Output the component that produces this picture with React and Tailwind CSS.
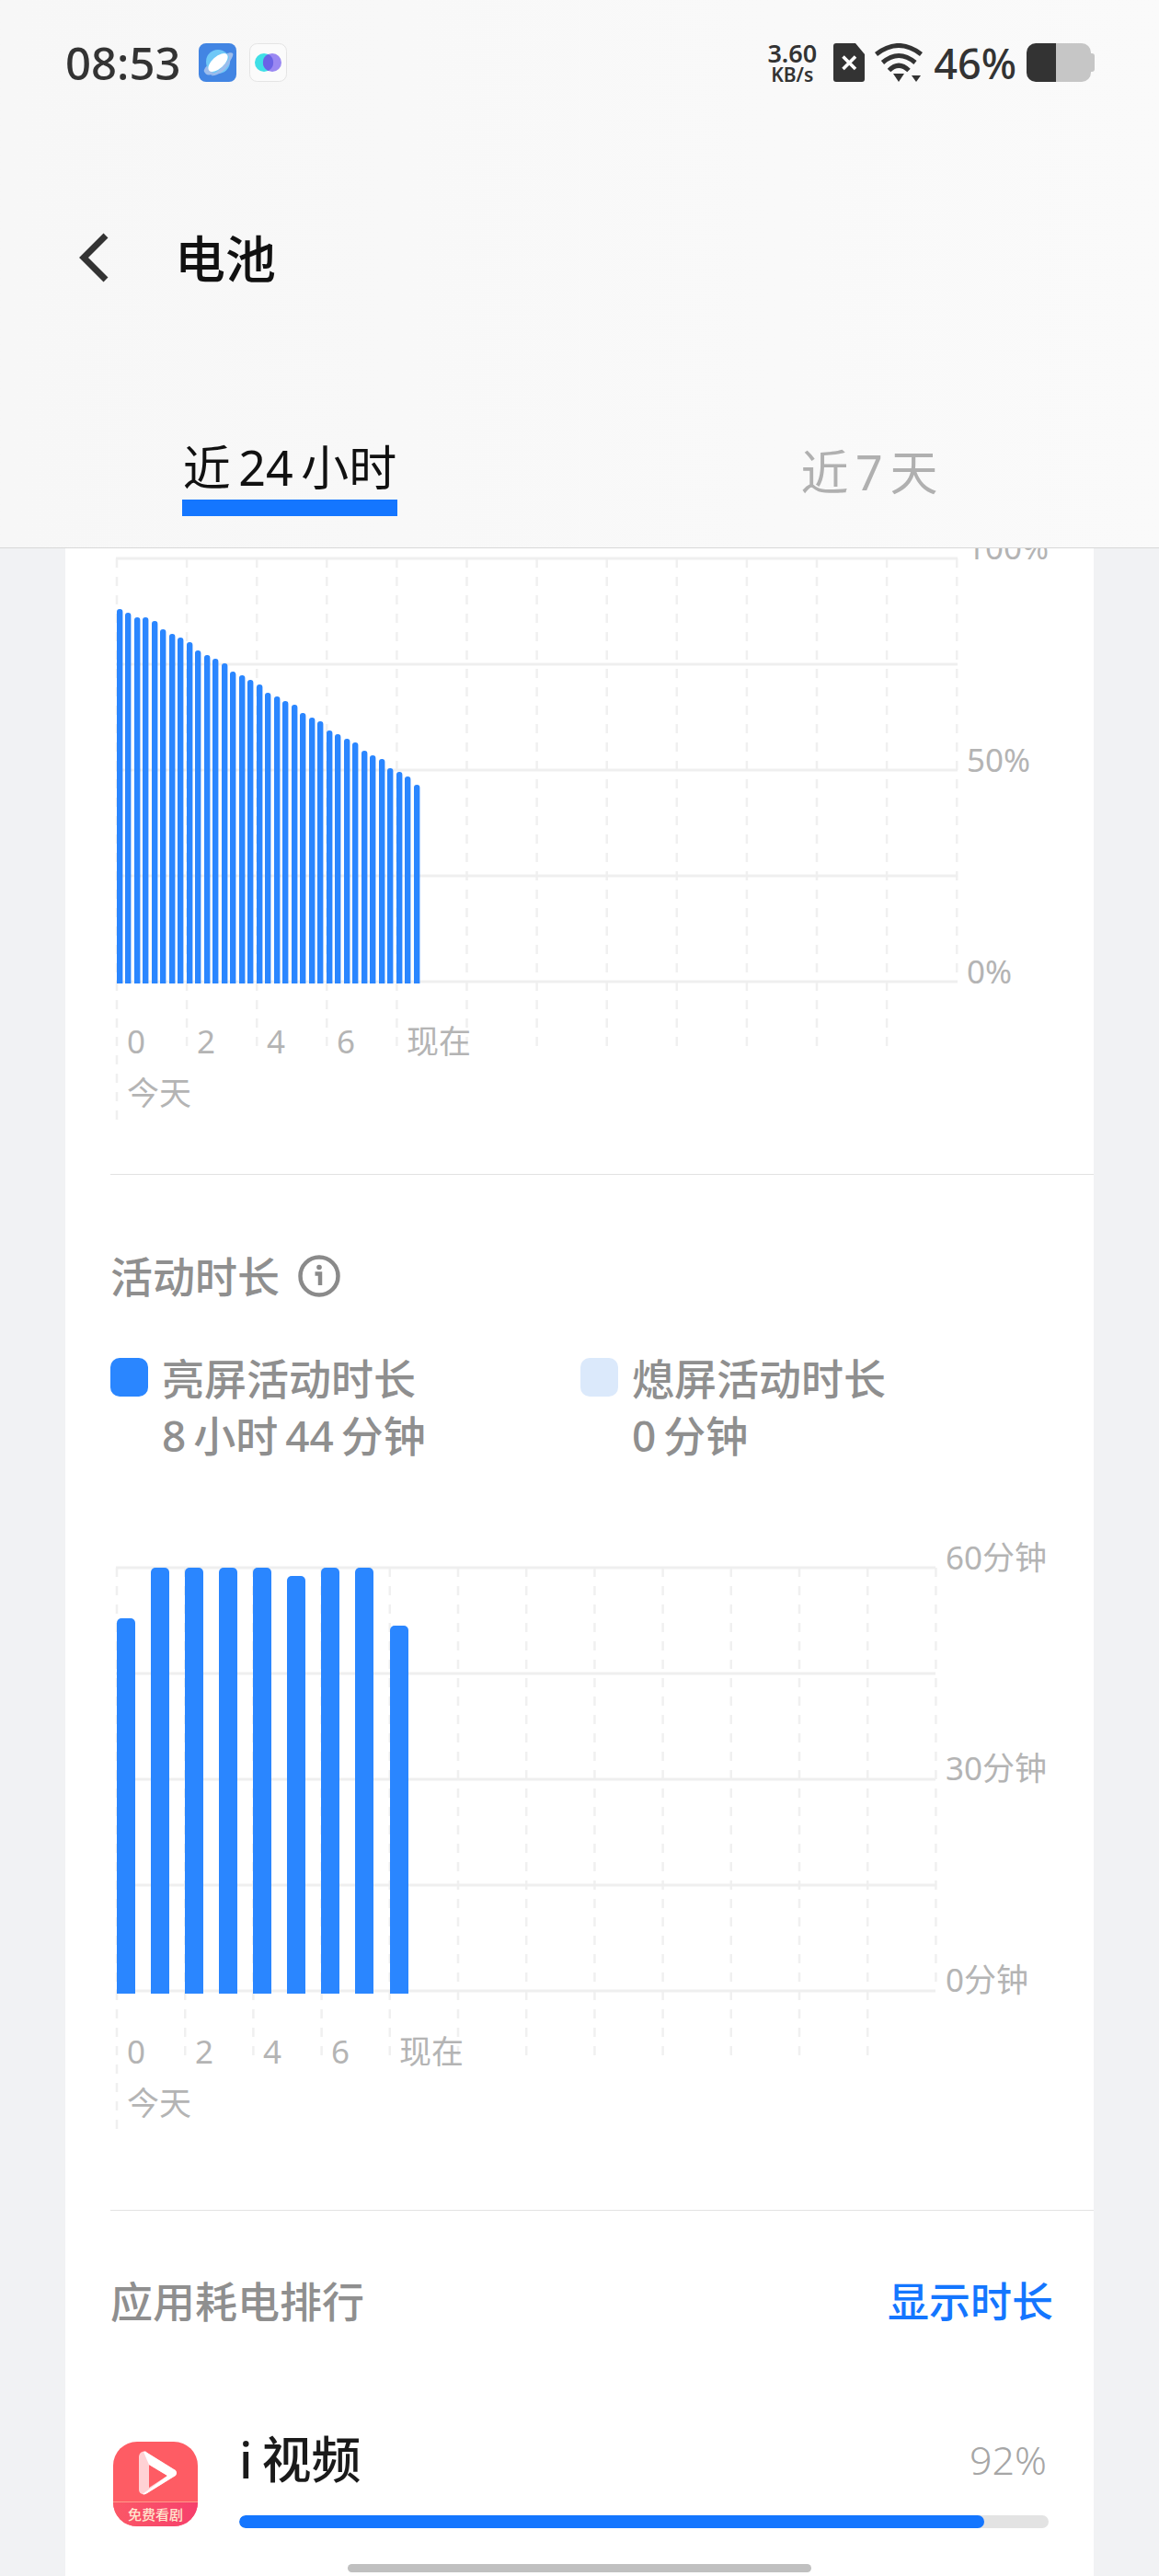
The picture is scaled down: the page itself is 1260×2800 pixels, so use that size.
import React from "react";

const batteryTops = [
  662, 666, 671, 671, 675, 684, 689, 693, 698, 707, 712, 716, 721, 730, 734, 739, 744, 753,
  757, 762, 766, 775, 780, 784, 794, 798, 803, 807, 816, 821, 825, 835, 839, 844, 853,
];

const activityBars = [
  { x: 127, top: 1759 },
  { x: 164, top: 1704 },
  { x: 201, top: 1704 },
  { x: 238, top: 1704 },
  { x: 275, top: 1704 },
  { x: 312, top: 1713 },
  { x: 349, top: 1704 },
  { x: 386, top: 1704 },
  { x: 424, top: 1767 },
];

const barPath = (x, top, bottom, w, r) =>
  `M${x} ${bottom}V${top + r}a${r} ${r} 0 0 1 ${r} ${-r}h${w - 2 * r}a${r} ${r} 0 0 1 ${r} ${r}V${bottom}z`;

const AxisText = ({ x, y, children }) => (
  <text x={x} y={y} dominantBaseline="central" className="fill-[#b4b4b4] text-[35px]">
    {children}
  </text>
);

const Grid = ({ left, step, right, top, rowStep, bottom, tickEnd, firstEnd }) => (
  <g>
    {[0, 1, 2, 3, 4, 5, 6, 7, 8, 9, 10, 11, 12].map((i) => (
      <line
        key={i}
        x1={left + step * i}
        x2={left + step * i}
        y1={top}
        y2={i === 0 ? firstEnd : i === 12 ? bottom : tickEnd}
        stroke="#f0f0f0"
        strokeWidth="2.5"
        strokeDasharray="10 10"
      />
    ))}
    {[0, 1, 2, 3, 4].map((i) => (
      <line
        key={i}
        x1={left - 1}
        x2={right}
        y1={i === 4 ? bottom : top + rowStep * i}
        y2={i === 4 ? bottom : top + rowStep * i}
        stroke="#efefef"
        strokeWidth="3"
      />
    ))}
  </g>
);

const BatteryChart = () => (
  <svg viewBox="71 596 1118 680" className="block h-[680px] w-full">
    <Grid left={127} step={76.1} right={1041} top={607} rowStep={115} bottom={1067} tickEnd={1137} firstEnd={1217} />
    {batteryTops.map((top, i) => (
      <path key={i} d={barPath(Math.floor(127 + i * 9.5), top, 1069, 6.4, 3)} fill="#2a86ff" />
    ))}
    <AxisText x={1051} y={594}>100%</AxisText>
    <AxisText x={1051} y={825}>50%</AxisText>
    <AxisText x={1051} y={1055}>0%</AxisText>
    <AxisText x={138} y={1131}>0</AxisText>
    <AxisText x={214} y={1131}>2</AxisText>
    <AxisText x={290} y={1131}>4</AxisText>
    <AxisText x={366} y={1131}>6</AxisText>
    <AxisText x={442} y={1131}>现在</AxisText>
    <AxisText x={138} y={1187}>今天</AxisText>
  </svg>
);

const ActivityChart = () => (
  <svg viewBox="71 1591 1118 811" className="block h-[811px] w-full">
    <Grid left={127} step={74.2} right={1017} top={1704} rowStep={115} bottom={2164} tickEnd={2234} firstEnd={2315} />
    {activityBars.map((bar) => (
      <path key={bar.x} d={barPath(bar.x, bar.top, 2167, 20, 5)} fill="#2a86ff" />
    ))}
    <AxisText x={1028} y={1692}>60分钟</AxisText>
    <AxisText x={1028} y={1921}>30分钟</AxisText>
    <AxisText x={1028} y={2151}>0分钟</AxisText>
    <AxisText x={138} y={2229}>0</AxisText>
    <AxisText x={212} y={2229}>2</AxisText>
    <AxisText x={286} y={2229}>4</AxisText>
    <AxisText x={360} y={2229}>6</AxisText>
    <AxisText x={434} y={2229}>现在</AxisText>
    <AxisText x={138} y={2285}>今天</AxisText>
  </svg>
);

const BrowserIcon = () => (
  <svg viewBox="0 0 41 42" className="h-[42px] w-[41px]">
    <rect width="41" height="42" rx="8" fill="#4285e3" />
    <path d="M6 31c-2-3 8-13 15-16s14-6 16-4-5 14-16 20-13 3-15 0z" fill="#9dbdec" />
    <circle cx="21" cy="20" r="13" fill="#6fc8f7" />
    <path d="M13 35c6 1 16-4 21-14l1-8c-4 9-14 18-22 22z" fill="#9dbdec" />
    <ellipse cx="21" cy="21" rx="13" ry="6.5" transform="rotate(-42 21 21)" fill="#fff" />
  </svg>
);

const LinkIcon = () => (
  <svg viewBox="0 0 41 42" className="h-[42px] w-[41px]">
    <rect x="0.5" y="0.5" width="40" height="41" rx="8" fill="#fbfbfb" stroke="#e4e4e4" />
    <circle cx="16" cy="21" r="10" fill="#3fdfe6" />
    <circle cx="25" cy="21" r="10" fill="#9a88f2" />
    <path d="M20.5 12a10 10 0 0 1 0 18 10 10 0 0 1 0-18z" fill="#6a63e6" />
  </svg>
);

const SimIcon = () => (
  <svg viewBox="0 0 34 42" className="h-[42px] w-[34px]">
    <path d="M3 0H24L34 12V39a3 3 0 0 1-3 3H3a3 3 0 0 1-3-3V3a3 3 0 0 1 3-3z" fill="#333" />
    <path d="M10.5 14.5L24 28M24 14.5L10.5 28" stroke="#fff" strokeWidth="3.6" />
  </svg>
);

const WifiIcon = () => (
  <svg viewBox="0 0 52 42" className="h-[42px] w-[52px]" fill="none" stroke="#333" strokeWidth="5">
    <path d="M1.5 12Q26 -7 50.5 12" />
    <path d="M8.5 21Q26 6 44 21" />
    <path d="M15.5 29.5Q26 19 37 29.5" />
    <path d="M20 33H32L26 42z" fill="#333" stroke="none" />
    <path d="M40 35H50L45 42z" fill="#333" stroke="none" />
  </svg>
);

const BatteryIcon = () => (
  <div className="flex items-center">
    <div className="flex h-[42px] w-[70px] overflow-hidden rounded-[10px]">
      <div className="w-[32px] bg-[#333]" />
      <div className="flex-1 bg-[#c6c6c6]" />
    </div>
    <div className="h-[20px] w-[4px] rounded-r-[3px] bg-[#c6c6c6]" />
  </div>
);

const InfoIcon = () => (
  <svg viewBox="0 0 46 46" className="ml-[20px] h-[46px] w-[46px]" fill="none" stroke="#8a8a8a">
    <circle cx="23" cy="23" r="20.5" strokeWidth="4.5" />
    <path d="M18.5 20.5H24V33" strokeWidth="4.5" />
    <circle cx="23" cy="13.5" r="2.8" fill="#8a8a8a" stroke="none" />
  </svg>
);

const VideoIcon = () => (
  <div className="flex h-[92px] w-[92px] shrink-0 flex-col overflow-hidden rounded-[26px] bg-[#fe5c64]">
    <svg viewBox="0 0 92 65" className="h-[65px] w-[92px] shrink-0">
      <path
        fillRule="evenodd"
        d="M28 17c0-5 4-8 9-5l29 18c4 2 4 6 0 8L37 56c-5 3-9 0-9-4zM39 25v25l20-13z"
        fill="#fff"
        fillOpacity="0.72"
      />
      <path d="M33 11c2-1 3 0 4 1l29 18c4 2 4 6 0 8L37 56c-2 1-3 2-5 1l27-20L39 25z" fill="#fff" />
    </svg>
    <div className="flex flex-1 items-center justify-center border-t border-[#ff9a8a] bg-linear-to-r from-[#fb5766] to-[#f63f6c] text-[15px] leading-none font-medium text-[#ffe6cf]">
      免费看剧
    </div>
  </div>
);

const Legend = ({ color, title, value, className }) => (
  <div className={`flex ${className}`}>
    <div className={`mt-[9px] mr-[15px] h-[42px] w-[41px] rounded-[10px] ${color}`} />
    <div className="text-[46px] leading-[62px] font-medium [word-spacing:-4px] text-[#8f8f8f]">
      <div>{title}</div>
      <div>{value}</div>
    </div>
  </div>
);

export default function App() {
  return (
    <div className="relative h-[2800px] w-[1260px] overflow-hidden bg-[#f1f2f4] font-['Noto_Sans','Noto_Sans_CJK_SC',sans-serif]">
      <header className="h-[596px] border-b border-[#d8d8d8] bg-linear-to-r from-[#f7f7f7] to-[#fafafa] pt-[47px]">
        <div className="flex h-[42px] items-center pr-[70px] pl-[71px]">
          <span className="text-[49px] leading-none font-medium text-[#333]">08:53</span>
          <div className="ml-[20px] flex gap-[14px]">
            <BrowserIcon />
            <LinkIcon />
          </div>
          <div className="ml-auto flex items-center">
            <div className="flex flex-col items-center font-semibold text-[#333]">
              <span className="text-[27px] leading-[27px]">3.60</span>
              <span className="text-[21px] leading-[21px]">KB/s</span>
            </div>
            <div className="ml-[18px] flex items-center gap-[11px]">
              <SimIcon />
              <WifiIcon />
            </div>
            <span className="ml-[12px] text-[45px] leading-none font-medium text-[#333]">46%</span>
            <div className="ml-[11px]">
              <BatteryIcon />
            </div>
          </div>
        </div>

        <div className="mt-[164px] flex h-[54px] items-center pl-[86px]">
          <svg viewBox="0 0 32 54" className="h-[54px] w-[32px]" fill="none" stroke="#333" strokeWidth="7">
            <path d="M29 3L5 27L29 51" />
          </svg>
          <h1 className="ml-[72px] text-[55px] leading-none font-medium text-[#111]">电池</h1>
        </div>

        <div className="mt-[174px] flex">
          <div className="flex flex-1 flex-col items-center">
            <div className="h-[54px] text-[52px] leading-[54px] [word-spacing:-5px] text-[#111]">近 24 小时</div>
            <div className="mt-[8px] h-[18px] w-[234px] bg-[#1476ff]" />
          </div>
          <div className="flex flex-1 justify-center">
            <div className="h-[54px] text-[52px] leading-[64px] [word-spacing:-6px] text-[#b0b0b0]">近 7 天</div>
          </div>
        </div>
      </header>

      <main className="mx-[71px] h-[2204px] bg-white">
        <BatteryChart />

        <section className="ml-[49px] border-t border-[#e2e2e2] pt-[80px]">
          <div className="flex h-[60px] items-center">
            <h2 className="text-[46px] leading-none font-medium text-[#8f8f8f]">活动时长</h2>
            <InfoIcon />
          </div>
          <div className="mt-[50px] flex">
            <Legend color="bg-[#2a86ff]" title="亮屏活动时长" value="8 小时 44 分钟" className="w-[511px]" />
            <Legend color="bg-[#dbe9fb]" title="熄屏活动时长" value="0 分钟" />
          </div>
        </section>

        <ActivityChart />

        <section className="ml-[49px] border-t border-[#e2e2e2] pt-[68px]">
          <div className="flex h-[60px] items-center justify-between pr-[44px]">
            <h2 className="text-[46px] leading-none font-medium text-[#8f8f8f]">应用耗电排行</h2>
            <span className="text-[45px] leading-none font-medium text-[#1476ff]">显示时长</span>
          </div>
          <div className="mt-[107px] flex pl-[3px]">
            <div className="mt-[16px]">
              <VideoIcon />
            </div>
            <div className="ml-[45px] w-[880px]">
              <div className="flex h-[70px] items-center justify-between">
                <span className="text-[54px] leading-none font-medium [word-spacing:-4px] text-[#1a1a1a]">i 视频</span>
                <span className="pr-[2px] text-[43px] leading-none font-light text-[#a6a6a6]">92%</span>
              </div>
              <div className="mt-[26px] h-[14px] w-full overflow-hidden rounded-full bg-[#e3e3e3]">
                <div className="h-full w-[810px] rounded-full bg-[#1476ff]" />
              </div>
            </div>
          </div>
        </section>
      </main>

      <div className="absolute bottom-[4px] left-[378px] h-[9px] w-[504px] rounded-full bg-[#c0c0c0]" />
    </div>
  );
}
